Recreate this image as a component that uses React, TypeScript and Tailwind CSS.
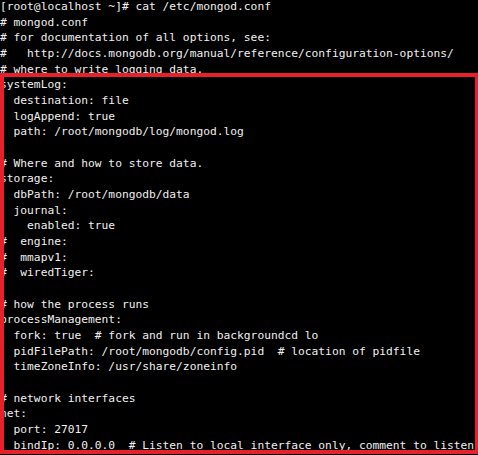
import React from "react";

const lines = [
  "[root@localhost ~]# cat /etc/mongod.conf",
  "# mongod.conf",
  "# for documentation of all options, see:",
  "#   http://docs.mongodb.org/manual/reference/configuration-options/",
  "# where to write logging data.",
  "systemLog:",
  "  destination: file",
  "  logAppend: true",
  "  path: /root/mongodb/log/mongod.log",
  "",
  "# Where and how to store data.",
  "storage:",
  "  dbPath: /root/mongodb/data",
  "  journal:",
  "    enabled: true",
  "#  engine:",
  "#  mmapv1:",
  "#  wiredTiger:",
  "",
  "# how the process runs",
  "processManagement:",
  "  fork: true  # fork and run in backgroundcd lo",
  "  pidFilePath: /root/mongodb/config.pid  # location of pidfile",
  "  timeZoneInfo: /usr/share/zoneinfo",
  "",
  "# network interfaces",
  "net:",
  "  port: 27017",
  "  bindIp: 0.0.0.0  # Listen to local interface only, comment to listen",
];

export default function App() {
  return (
    <div className="relative w-[478px] h-[455px] overflow-hidden bg-black">
      <pre
        className="-mt-[1px] whitespace-pre text-[11.25px] leading-[15.68px] text-[#f0f0f0]"
        style={{ fontFamily: '"DejaVu Sans Mono", "Liberation Mono", monospace' }}
      >
        {lines.map((l, i) => (
          <div key={i} className="h-[15.68px]">
            {l}
          </div>
        ))}
      </pre>
      <div className="absolute left-0 top-[73px] w-[478px] h-[381px] border-[4px] border-r-[3px] border-[#e8202a]" />
    </div>
  );
}
